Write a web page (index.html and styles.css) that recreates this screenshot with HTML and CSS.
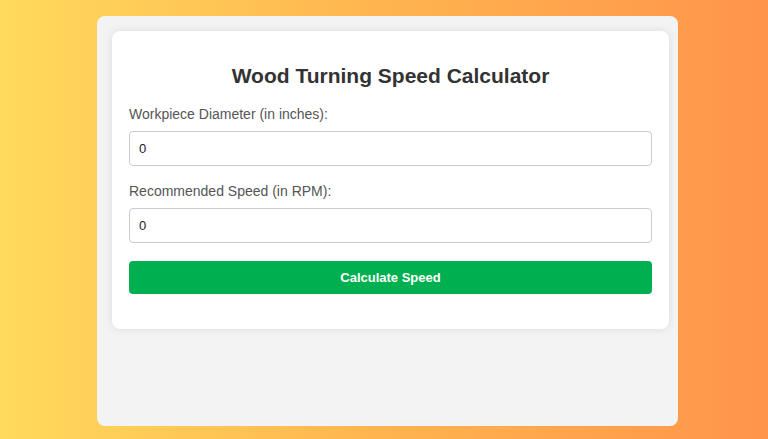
FILE: index.html
```html
<!DOCTYPE html>
<html>
<head>
<meta charset="utf-8">
<link rel="stylesheet" href="styles.css">
</head>
<body>
<div class="panel">
  <div class="card">
    <h2 class="title">Wood Turning Speed Calculator</h2>
    <label class="label" for="dia">Workpiece Diameter (in inches):</label>
    <input class="field" id="dia" type="text" value="0">
    <label class="label label-second" for="rpm">Recommended Speed (in RPM):</label>
    <input class="field field-second" id="rpm" type="text" value="0">
    <button class="btn">Calculate Speed</button>
  </div>
</div>
</body>
</html>
```
FILE: styles.css
```css
html, body {
  margin: 0;
  padding: 0;
  height: 100%;
}
body {
  background: linear-gradient(to right, #ffda5c 0%, #ffb44f 50%, #ff944b 100%);
  font-family: "Liberation Sans", Arial, sans-serif;
  overflow: hidden;
}
.panel {
  box-sizing: border-box;
  width: 581px;
  height: 410px;
  margin: 16px 0 0 97px;
  padding: 15px 9px 0 15px;
  background: #f3f3f3;
  border-radius: 8px;
}
.card {
  box-sizing: border-box;
  background: #fff;
  border-radius: 8px;
  box-shadow: 0 0 8px rgba(0, 0, 0, 0.1);
  padding: 33px 17px 35px 17px;
  display: flex;
  flex-direction: column;
}
.title {
  margin: 0;
  font-size: 21px;
  line-height: 24px;
  font-weight: bold;
  color: #333;
  text-align: center;
}
.label {
  margin-top: 18px;
  font-size: 14px;
  line-height: 17px;
  color: #555;
}
.label-second {
  margin-top: 17px;
}
.field {
  box-sizing: border-box;
  margin-top: 8px;
  height: 35px;
  padding: 0 9px;
  border: 1px solid #ccc;
  border-radius: 4px;
  font-family: "Liberation Sans", Arial, sans-serif;
  font-size: 13px;
  color: #222;
  background: #fff;
}
.field-second {
  margin-top: 8px;
}
.btn {
  margin-top: 18px;
  height: 33px;
  border: none;
  border-radius: 4px;
  background: #00b050;
  color: #fff;
  font-family: "Liberation Sans", Arial, sans-serif;
  font-weight: bold;
  font-size: 13px;
}
```
